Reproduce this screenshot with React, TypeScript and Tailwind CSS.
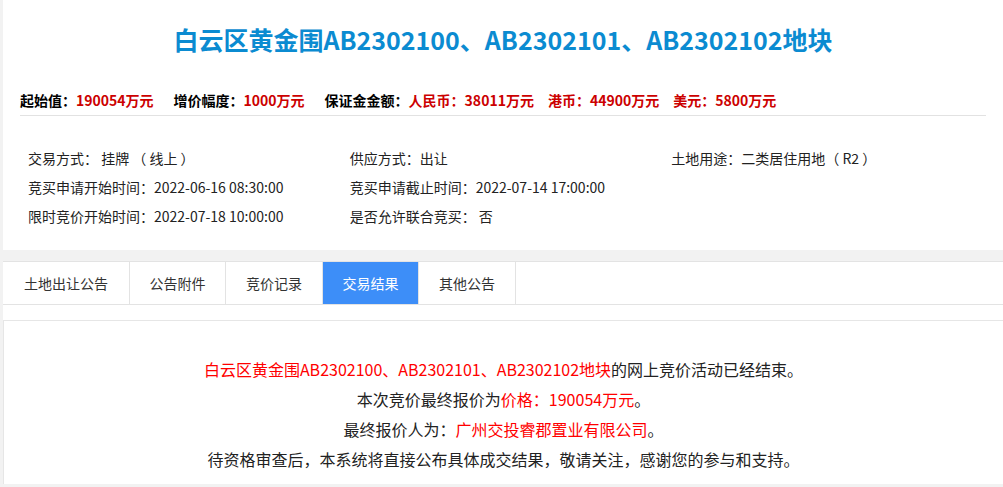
export default function App() {
  const tabs = ["土地出让公告", "公告附件", "竞价记录", "交易结果", "其他公告"];
  const widths = ["w-[127px]", "w-[96px]", "w-[97px]", "w-[96px]", "w-[97px]"];
  return (
    <div className="min-h-[487px] bg-[#f2f2f2] pl-[3px] text-[#333]" style={{ fontFamily: '"Noto Sans CJK SC", "Liberation Sans", sans-serif' }}>
      <div className="h-[250px] bg-white">
        <h1 className="pt-[22px] text-center text-[25px] font-bold leading-[34px] text-[#0b8bd1]">
          白云区黄金围AB2302100、AB2302101、AB2302102地块
        </h1>
        <div className="mx-[17px] mt-[33px] border-b border-[#e2e2e2] pb-[4px] text-[14px] font-bold leading-[22px] text-black">
          起始值：<span className="text-[#c00]">190054万元</span>
          <span className="ml-[20px]">增价幅度：</span><span className="text-[#c00]">1000万元</span>
          <span className="ml-[20px]">保证金金额：</span><span className="text-[#c00]">人民币：38011万元　港币：44900万元　美元：5800万元</span>
        </div>
        <div className="ml-[25px] mr-[10px] mt-[31px] grid grid-cols-3 gap-y-[7px] text-[14px] leading-[22px] text-[#222]">
          <div>交易方式： 挂牌 （ 线上 ）</div>
          <div>供应方式：出让</div>
          <div>土地用途：二类居住用地（ R2 ）</div>
          <div>竞买申请开始时间：2022-06-16 08:30:00</div>
          <div>竞买申请截止时间：2022-07-14 17:00:00</div>
          <div></div>
          <div>限时竞价开始时间：2022-07-18 10:00:00</div>
          <div>是否允许联合竞买： 否</div>
        </div>
      </div>
      <div className="mt-[11px] flex h-[44px] border-y border-[#e3e3e3] bg-white">
        {tabs.map((t, i) => (
          <div
            key={t}
            className={`${widths[i]} flex items-center justify-center border-r border-[#e3e3e3] text-[14px] ${i === 3 ? "bg-[#3d8ef8] text-white" : "text-[#333]"}`}
          >
            {t}
          </div>
        ))}
      </div>
      <div className="h-[15px] bg-white" />
      <div className="border-t border-l border-[#e6e6e6] bg-white pb-[10px] pt-[33px] text-center text-[16px] leading-[30px] text-[#222]">
        <p><span className="text-[#f00]">白云区黄金围AB2302100、AB2302101、AB2302102地块</span>的网上竞价活动已经结束。</p>
        <p>本次竞价最终报价为<span className="text-[#f00]">价格：190054万元</span>。</p>
        <p>最终报价人为：<span className="text-[#f00]">广州交投睿郡置业有限公司</span>。</p>
        <p>待资格审查后，本系统将直接公布具体成交结果，敬请关注，感谢您的参与和支持。</p>
      </div>
    </div>
  );
}
